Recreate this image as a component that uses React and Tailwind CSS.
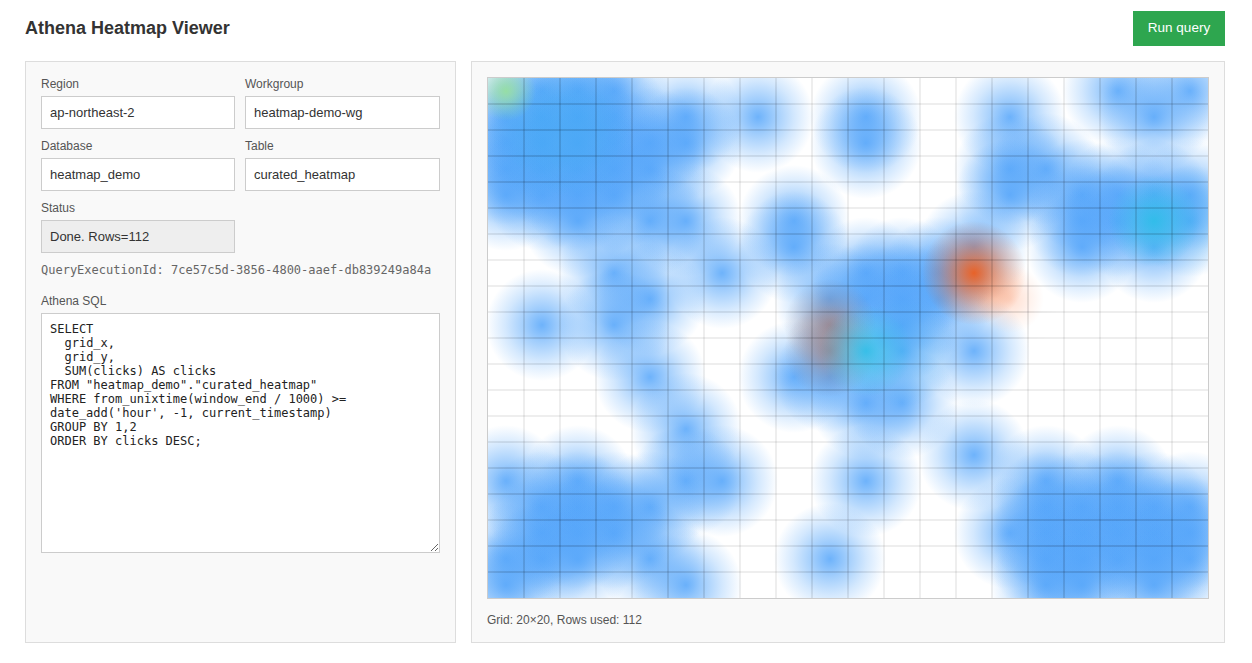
const SANS = "font-['Liberation_Sans',Arial,sans-serif]";
const MONO = "font-['DejaVu_Sans_Mono',monospace]";

const SQL = `SELECT
  grid_x,
  grid_y,
  SUM(clicks) AS clicks
FROM "heatmap_demo"."curated_heatmap"
WHERE from_unixtime(window_end / 1000) >= date_add('hour', -1, current_timestamp)
GROUP BY 1,2
ORDER BY clicks DESC;`;

// one string per grid row, one char per cell: b blue, c cyan, l light cyan, g green, r red, p peach, m brown
const CELLS = [
  "gbbb.............b.b",
  "bllb.b.b..b...b...b.",
  "bllbbb....b.........",
  "bbbbb.........bb....",
  "bbbb..........b.bbbb",
  "..b.bb..b.......bbcl",
  "........b....b..b.b.",
  "...b..b...bbbr......",
  "....b....bbbb.p.....",
  ".b.b.....m.b........",
  ".........mcl.b......",
  "....b...bb..........",
  "..........bb........",
  ".....b..............",
  ".............b......",
  "b.b..bb...b....b.b..",
  ".bbbb..........bbbbb",
  ".bbb..........bbbbbb",
  "bbb.b....b.....bbbbb",
  "b....b.........bb.b.",
];

const COLORS = {
  b: { rgb: "84,165,250", peak: 0.85, radius: 56 },
  l: { rgb: "72,167,246", peak: 0.85, radius: 56 },
  c: { rgb: "44,190,232", peak: 0.9, radius: 46 },
  g: { rgb: "150,222,165", peak: 1, radius: 30 },
  m: { rgb: "150,125,130", peak: 0.75, radius: 46 },
  r: { rgb: "232,98,40", peak: 1, radius: 52 },
  p: { rgb: "255,175,140", peak: 0.45, radius: 34 },
};

// hot ones go on top of the blues
const ORDER = ["b", "l", "m", "c", "g", "p", "r"];

function Heatmap() {
  const points = [];
  ORDER.forEach((kind) => {
    CELLS.forEach((row, r) => {
      [...row].forEach((ch, c) => {
        if (ch === kind) points.push({ kind, c, r });
      });
    });
  });

  const lines = [];
  for (let i = 1; i < 20; i++) {
    lines.push(<line key={`v${i}`} x1={i * 36} y1="0" x2={i * 36} y2="520" />);
    lines.push(<line key={`h${i}`} x1="0" y1={i * 26} x2="720" y2={i * 26} />);
  }

  return (
    <svg viewBox="0 0 720 520" className="block w-[720px] h-[520px] bg-white">
      <defs>
        {Object.entries(COLORS).map(([key, { rgb, peak }]) => (
          <radialGradient key={key} id={`heat-${key}`}>
            <stop offset="0" stopColor={`rgb(${rgb})`} stopOpacity={peak} />
            <stop offset="0.3" stopColor={`rgb(${rgb})`} stopOpacity={peak * 0.66} />
            <stop offset="0.65" stopColor={`rgb(${rgb})`} stopOpacity={peak * 0.3} />
            <stop offset="1" stopColor={`rgb(${rgb})`} stopOpacity="0" />
          </radialGradient>
        ))}
        <radialGradient id="heat-mask">
          <stop offset="0" stopColor="#fff" stopOpacity="0.9" />
          <stop offset="0.65" stopColor="#fff" stopOpacity="0.3" />
          <stop offset="1" stopColor="#fff" stopOpacity="0" />
        </radialGradient>
        <mask id="over-heat" maskUnits="userSpaceOnUse" x="0" y="0" width="720" height="520">
          {points.map((p) => (
            <circle key={`${p.c}-${p.r}`} cx={p.c * 36 + 18} cy={p.r * 26 + 13} r="54" fill="url(#heat-mask)" />
          ))}
        </mask>
      </defs>
      {points.map((p) => (
        <circle
          key={`${p.c}-${p.r}`}
          cx={p.c * 36 + 18}
          cy={p.r * 26 + 13}
          r={COLORS[p.kind].radius}
          fill={`url(#heat-${p.kind})`}
        />
      ))}
      {/* grid: faint on white, stronger over the colour */}
      <g stroke="rgba(0,0,0,0.065)" strokeWidth="2">{lines}</g>
      <g stroke="rgba(0,0,0,0.06)" strokeWidth="2" mask="url(#over-heat)">{lines}</g>
    </svg>
  );
}

function Field({ label, value, disabled }) {
  return (
    <label className="block">
      <span className="block text-xs leading-[14px] mb-[5px] text-[#555]">{label}</span>
      <input
        readOnly
        value={value}
        className={`block w-full h-[33px] px-2 text-[13px] text-[#333] border border-[#ccc] outline-none ${disabled ? "bg-[#eee]" : "bg-white"}`}
      />
    </label>
  );
}

export default function App() {
  return (
    <div className={`${SANS} w-[1200px] h-[663px] ml-[25px] bg-white pt-[11px] overflow-hidden`}>
      <header className="flex items-center justify-between h-[35px] mb-[15px]">
        <h1 className="text-lg font-bold text-[#333] mb-[2px]">Athena Heatmap Viewer</h1>
        <button type="button" className="w-[92px] h-[35px] bg-[#2ea64f] text-white text-[13.5px]">Run query</button>
      </header>
      <main className="flex gap-[15px] h-[582px]">
        <section className="w-[431px] shrink-0 border border-[#ddd] bg-[#f9f9f9] p-[15px]">
          <div className="grid grid-cols-[194px_195px] gap-[10px]">
            <Field label="Region" value="ap-northeast-2" />
            <Field label="Workgroup" value="heatmap-demo-wg" />
            <Field label="Database" value="heatmap_demo" />
            <Field label="Table" value="curated_heatmap" />
            <Field label="Status" value="Done. Rows=112" disabled />
          </div>
          <div className={`${MONO} mt-[10px] text-xs leading-[14px] text-[#666]`}>
            QueryExecutionId: 7ce57c5d-3856-4800-aaef-db839249a84a
          </div>
          <label className="block mt-[17px]">
            <span className="block text-xs leading-[14px] mb-[5px] text-[#555]">Athena SQL</span>
            <textarea
              readOnly
              value={SQL}
              className={`${MONO} block w-full h-[240px] px-2 py-[8px] text-xs leading-[14px] text-[#222] bg-white border border-[#ccc] outline-none`}
            />
          </label>
        </section>
        <section className="flex-1 border border-[#ddd] bg-[#f9f9f9] p-[15px]">
          <div className="w-[722px] border border-[#ccc]">
            <Heatmap />
          </div>
          <p className="mt-[14px] text-xs leading-[14px] text-[#555]">Grid: 20×20, Rows used: 112</p>
        </section>
      </main>
    </div>
  );
}
